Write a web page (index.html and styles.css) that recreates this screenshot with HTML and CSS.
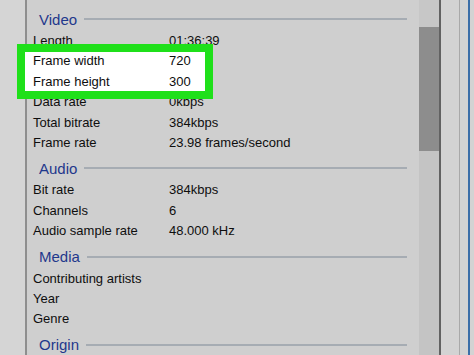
FILE: index.html
```html
<!DOCTYPE html>
<html lang="en">
<head>
    <meta charset="UTF-8">
    <title>Properties - Details</title>
    <link rel="stylesheet" href="styles.css">
</head>
<body>
    <div class="window">
        <div class="sidebar"></div>

        <div class="panel">
            <div class="section">
                <div class="section-title"><span>Video</span></div>
                <div class="row"><span class="label">Length</span><span class="value">01:36:39</span></div>
                <div class="highlight">
                    <div class="row"><span class="label">Frame width</span><span class="value">720</span></div>
                    <div class="row"><span class="label">Frame height</span><span class="value">300</span></div>
                </div>
                <div class="row"><span class="label">Data rate</span><span class="value">0kbps</span></div>
                <div class="row"><span class="label">Total bitrate</span><span class="value">384kbps</span></div>
                <div class="row"><span class="label">Frame rate</span><span class="value">23.98 frames/second</span></div>
            </div>

            <div class="section">
                <div class="section-title"><span>Audio</span></div>
                <div class="row"><span class="label">Bit rate</span><span class="value">384kbps</span></div>
                <div class="row"><span class="label">Channels</span><span class="value">6</span></div>
                <div class="row"><span class="label">Audio sample rate</span><span class="value">48.000 kHz</span></div>
            </div>

            <div class="section">
                <div class="section-title"><span>Media</span></div>
                <div class="row"><span class="label">Contributing artists</span><span class="value"></span></div>
                <div class="row"><span class="label">Year</span><span class="value"></span></div>
                <div class="row"><span class="label">Genre</span><span class="value"></span></div>
            </div>

            <div class="section">
                <div class="section-title"><span>Origin</span></div>
            </div>
        </div>

        <div class="scrollbar">
            <div class="scroll-top"></div>
            <div class="scroll-thumb"></div>
        </div>

        <div class="frame">
            <div class="frame-inner"></div>
            <div class="frame-edge"></div>
        </div>
    </div>
</body>
</html>
```

FILE: styles.css
```css
* {
    margin: 0;
    padding: 0;
    box-sizing: border-box;
}

body {
    background-color: #d2d2d2;
    font-family: 'Liberation Sans', Arial, sans-serif;
    overflow: hidden;
}

.window {
    display: flex;
    height: 355px;
}

.sidebar {
    width: 27px;
    background: #d5d5d5;
    border-right: 2px solid #8e8e8e;
}

.panel {
    flex: 1;
    min-width: 0;
    background: #cfcfcf;
    padding: 7px 12px 0 6px;
}

.section + .section {
    margin-top: 3px;
}

.section-title {
    display: flex;
    align-items: center;
    gap: 7px;
    height: 24px;
    padding-left: 6px;
    font-size: 15px;
    color: #1f388c;
}

.section-title::after {
    content: '';
    flex: 1;
    height: 2px;
    background: #a6acb3;
}

.row {
    display: grid;
    grid-template-columns: 136px 1fr;
    height: 20.4px;
    line-height: 20.4px;
    font-size: 13px;
    color: #0e0e0e;
    white-space: nowrap;
}

.highlight {
    position: relative;
    width: 182px;
    margin-left: -9.5px;
    padding-left: 9.5px;
    background: #ffffff;
    outline: 8px solid #1fe01a;
    outline-offset: -1.5px;
}

.scrollbar {
    width: 20px;
    background: #c4c4c4;
}

.scroll-top {
    height: 27px;
    background: #c7c7c7;
}

.scroll-thumb {
    height: 124px;
    background: #8d8d8d;
}

.frame {
    display: flex;
    width: 35px;
    background: #d3d3d3;
    border-left: 2px solid #626262;
}

.frame-inner {
    width: 19px;
    border-right: 1px solid #a9a9a9;
}

.frame-edge {
    width: 10px;
    border-right: 2px solid #3b6ea8;
}
```
